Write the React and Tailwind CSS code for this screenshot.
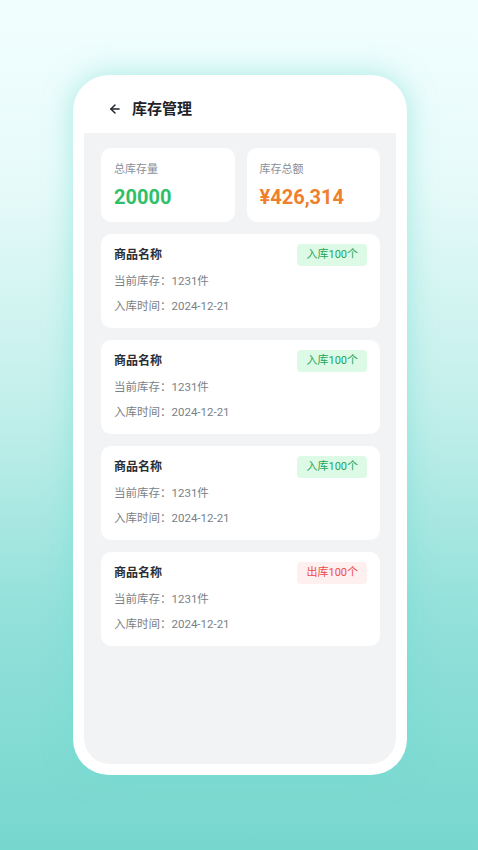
import { ArrowLeft } from "lucide-react";

const items = [
  { type: "in", text: "入库100个" },
  { type: "in", text: "入库100个" },
  { type: "in", text: "入库100个" },
  { type: "out", text: "出库100个" },
];

function StatCard({ label, value, color }) {
  return (
    <div className="flex-1 bg-white rounded-[10px] h-[74px] px-[13px] pt-[14px]">
      <div className="text-[11px] leading-[16px] text-[#8a8f99]">{label}</div>
      <div className={`text-[20px] leading-[26px] font-bold mt-[6px] ${color}`}>{value}</div>
    </div>
  );
}

function ItemCard({ item }) {
  const badge =
    item.type === "in"
      ? "bg-[#dcfae6] text-[#22a559]"
      : "bg-[#fff0f0] text-[#ef4b4b]";
  return (
    <div className="bg-white rounded-[10px] h-[94px] pl-[13px] pr-[13px] pt-[10px]">
      <div className="flex items-start justify-between">
        <div className="text-[12px] leading-[20px] font-bold text-[#2a2e35] mt-[1px]">商品名称</div>
        <div className={`text-[11px] leading-[22px] px-[9px] rounded-[4px] ${badge}`}>{item.text}</div>
      </div>
      <div className="text-[11.5px] leading-[18px] text-[#7a7f88] mt-[6px]">当前库存：1231件</div>
      <div className="text-[11.5px] leading-[18px] text-[#7a7f88] mt-[7px]">入库时间：2024-12-21</div>
    </div>
  );
}

export default function App() {
  return (
    <div
      className="w-[478px] h-[850px] overflow-hidden bg-[linear-gradient(180deg,#f1fefe_0%,#e8fbfa_20%,#c2efeb_48%,#93e1da_72%,#76d7cf_100%)] pt-[75px]"
      style={{ fontFamily: 'Roboto, "Noto Sans CJK SC", sans-serif' }}
    >
      <div className="ml-[73px] w-[334px] h-[700px] bg-white rounded-[36px] px-[11px] pb-[11px] flex flex-col shadow-[0_0_28px_rgba(110,220,210,0.55)]">
        <div className="h-[58px] flex items-center pl-[24px] pt-[10px] shrink-0">
          <ArrowLeft size={14} strokeWidth={2.5} className="text-[#1f2329]" />
          <span className="ml-[10px] text-[15px] font-semibold text-[#1f2329]">库存管理</span>
        </div>
        <div className="flex-1 bg-[#f2f3f5] rounded-b-[26px] pl-[17px] pr-[16px] pt-[15px] flex flex-col gap-[12px]">
          <div className="flex gap-[12px]">
            <StatCard label="总库存量" value="20000" color="text-[#2fbf68]" />
            <StatCard label="库存总额" value="¥426,314" color="text-[#f07f2c]" />
          </div>
          {items.map((item, i) => (
            <ItemCard key={i} item={item} />
          ))}
        </div>
      </div>
    </div>
  );
}
